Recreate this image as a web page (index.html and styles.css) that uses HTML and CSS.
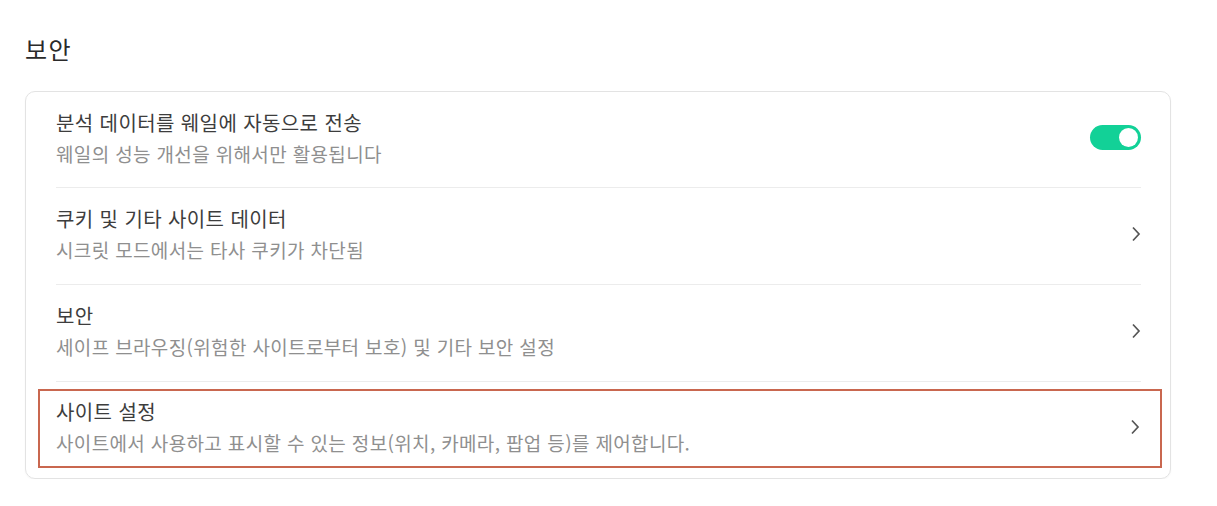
FILE: index.html
```html
<!DOCTYPE html>
<html lang="ko">
<head>
    <meta charset="UTF-8">
    <meta name="viewport" content="width=device-width, initial-scale=1.0">
    <title>보안</title>
    <link rel="stylesheet" href="styles.css">
</head>
<body>
    <div class="section">
        <h2 class="section-title">보안</h2>

        <div class="card">
            <div class="row first">
                <div class="row-text">
                    <div class="row-title">분석 데이터를 웨일에 자동으로 전송</div>
                    <div class="row-desc">웨일의 성능 개선을 위해서만 활용됩니다</div>
                </div>
                <div class="toggle on"><span class="knob"></span></div>
            </div>

            <div class="row">
                <div class="row-text">
                    <div class="row-title">쿠키 및 기타 사이트 데이터</div>
                    <div class="row-desc">시크릿 모드에서는 타사 쿠키가 차단됨</div>
                </div>
                <svg class="chevron" viewBox="0 0 10 16" width="10" height="16"><path d="M2 1.5l6 6.5-6 6.5" fill="none" stroke="#555" stroke-width="1.7"/></svg>
            </div>

            <div class="row">
                <div class="row-text">
                    <div class="row-title">보안</div>
                    <div class="row-desc">세이프 브라우징(위험한 사이트로부터 보호) 및 기타 보안 설정</div>
                </div>
                <svg class="chevron" viewBox="0 0 10 16" width="10" height="16"><path d="M2 1.5l6 6.5-6 6.5" fill="none" stroke="#555" stroke-width="1.7"/></svg>
            </div>

            <div class="row last">
                <div class="highlight">
                    <div class="row-text">
                        <div class="row-title">사이트 설정</div>
                        <div class="row-desc">사이트에서 사용하고 표시할 수 있는 정보(위치, 카메라, 팝업 등)를 제어합니다.</div>
                    </div>
                    <svg class="chevron" viewBox="0 0 10 16" width="10" height="16"><path d="M2 1.5l6 6.5-6 6.5" fill="none" stroke="#555" stroke-width="1.7"/></svg>
                </div>
            </div>
        </div>
    </div>
</body>
</html>
```

FILE: styles.css
```css
body {
    margin: 0;
    background: #fff;
    font-family: "Noto Sans CJK KR", "Noto Sans", sans-serif;
    color: #333;
}
.section {
    padding: 30px 46px 0 25px;
}
.section-title {
    margin: 0 0 23px;
    font-size: 24px;
    font-weight: 400;
    letter-spacing: 1.5px;
    line-height: 38px;
    color: #2a2a2a;
}
.card {
    border: 1px solid #e3e3e3;
    border-radius: 10px;
    box-shadow: 0 1px 2px rgba(0,0,0,0.04);
}
.row {
    display: flex;
    align-items: center;
    justify-content: space-between;
    box-sizing: border-box;
    margin: 0 29px 0 30px;
    height: 97px;
    padding-bottom: 5px;
    border-bottom: 1px solid #ececec;
}
.row.first {
    height: 96px;
    padding-bottom: 4px;
}
.row.last {
    display: block;
    border-bottom: none;
    margin: 0 8px 0 12px;
    height: 96px;
    padding: 7px 0 0;
}
.highlight {
    display: flex;
    align-items: center;
    justify-content: space-between;
    box-sizing: border-box;
    height: 79px;
    padding: 0 20px 3px 16px;
    border: 2px solid #c9674f;
}
.row-title {
    font-size: 20px;
    letter-spacing: 0.4px;
    line-height: 31px;
    color: #3d3d3d;
}
.row-desc {
    font-size: 19px;
    letter-spacing: 0.35px;
    line-height: 31px;
    color: #8f8f8f;
}
.toggle {
    width: 51px;
    height: 25px;
    border-radius: 13px;
    background: #d5d5d5;
    position: relative;
}
.toggle.on {
    background: #12d197;
}
.toggle .knob {
    position: absolute;
    top: 3px;
    right: 3px;
    width: 19px;
    height: 19px;
    border-radius: 50%;
    background: #fff;
}
```
